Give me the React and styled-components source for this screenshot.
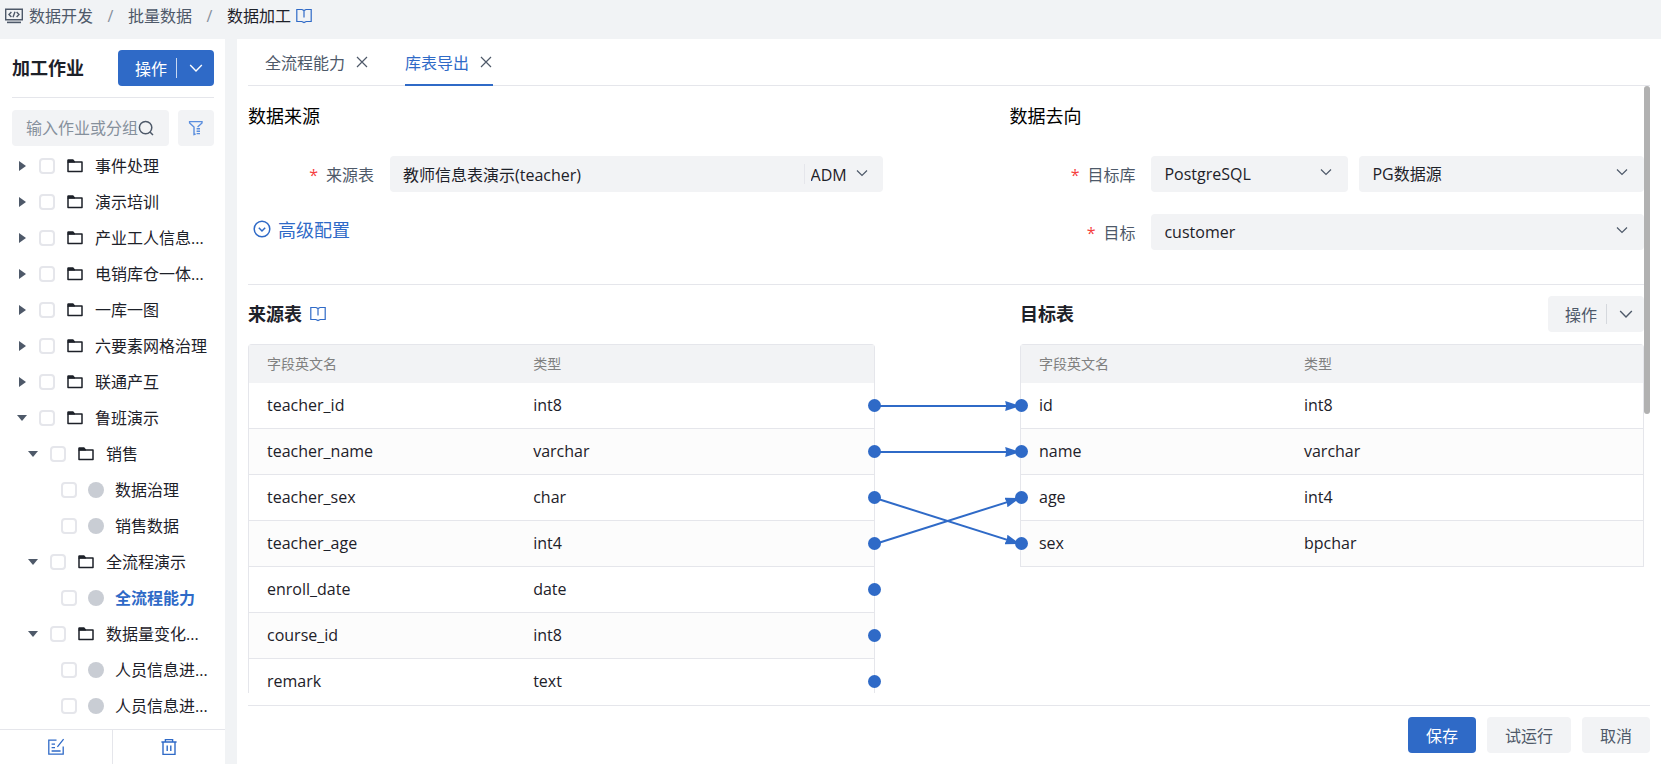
import React from "react";
import styled, { createGlobalStyle, css } from "styled-components";

const c = {
  primary: "#2f6ac7",
  text: "#1d2129",
  sub: "#4e5969",
  muted: "#86909c",
  line: "#e5e6eb",
  fill: "#f2f3f5",
  page: "#f1f3f5",
};

const GlobalStyle = createGlobalStyle`
  * { box-sizing: border-box; }
  body { margin: 0; background: ${c.page}; }
  body, button, input, select {
    font-family: "Open Sans", "Noto Sans CJK SC", sans-serif;
    font-size: 16px;
    color: ${c.text};
  }
  button, input, select { border: 0; background: none; padding: 0; margin: 0; outline: none; }
  button { cursor: pointer; }
  svg { display: block; flex: none; }
`;

/* ---------- icons ---------- */

const Chevron = ({ size = 12 }) => (
  <svg width={size} height={size} viewBox="0 0 12 12" fill="none" stroke="currentColor" strokeWidth="1.2">
    <path d="M1 3.5 6 8.5 11 3.5" />
  </svg>
);

const Close = () => (
  <svg width="14" height="14" viewBox="0 0 14 14" fill="none" stroke="currentColor" strokeWidth="1.2">
    <path d="M2 2 12 12M12 2 2 12" />
  </svg>
);

const Book = () => (
  <svg width="16" height="16" viewBox="0 0 16 16" fill="none" stroke={c.primary} strokeWidth="1.2">
    <path d="M.8 1.5H6L8 2.5 10 1.5H15.2V13.5H10.2L8 14.6 5.8 13.5H.8ZM8 2.5V9.5" />
  </svg>
);

const CodeScreen = () => (
  <svg width="18" height="16" viewBox="0 0 18 16" fill="none" stroke={c.sub} strokeWidth="1.4">
    <path d="M.7 1.2H17.3V11.8H.7Z" />
    <path d="M6.4 4 4 6.5 6.4 9M11.6 4 14 6.5 11.6 9M10 3.8 8 9.2" />
    <path d="M2 14.4H16" strokeWidth="1.6" />
  </svg>
);

const Search = () => (
  <svg width="16" height="16" viewBox="0 0 16 16" fill="none" stroke={c.sub} strokeWidth="1.5">
    <circle cx="7.6" cy="7.6" r="6.2" />
    <path d="M12 12 15 15" />
  </svg>
);

const Filter = () => (
  <svg width="16" height="16" viewBox="0 0 16 16" fill="none" stroke="#5b8ede" strokeWidth="1.4">
    <path d="M9.6 7 14 3V1.6H1.6V3L6 7V14.6L7.6 14" />
    <path d="M8.6 8.8H12M8.6 11.2H12M8.6 13.6H12" />
  </svg>
);

const Folder = () => (
  <svg width="16" height="14" viewBox="0 0 16 14">
    <path d="M1 3H15V12.6H1Z" fill="none" stroke={c.text} strokeWidth="1.5" strokeLinejoin="round" />
    <path d="M.3 3.4V1.2Q.3.3 1.2.3H6.2L8 2.4V3.4Z" fill={c.text} />
  </svg>
);

const Caret = ({ open }) =>
  open ? (
    <svg width="10" height="10" viewBox="0 0 10 10"><path d="M0 2H10L5 8Z" fill={c.sub} /></svg>
  ) : (
    <svg width="10" height="10" viewBox="0 0 10 10"><path d="M2 0V10L9 5Z" fill={c.sub} /></svg>
  );

const Edit = () => (
  <svg width="18" height="18" viewBox="0 0 18 18" fill="none" stroke={c.primary} strokeWidth="1.3">
    <path d="M9.5 2.2H1.8V16.2H16.2V8.5" />
    <path d="M16.6 1.2 10.4 8.8M4.6 6.2H8M4.6 9.6H8M4.6 13H13.6" />
  </svg>
);

const Trash = () => (
  <svg width="18" height="18" viewBox="0 0 18 18" fill="none" stroke={c.primary} strokeWidth="1.4">
    <path d="M1.4 4H16.6M5.4 4V1.6H12.6V4M3 4V16.4H15V4M7.2 7.4V13M10.8 7.4V13" />
  </svg>
);

const CircleDown = () => (
  <svg width="18" height="18" viewBox="0 0 18 18" fill="none" stroke="currentColor" strokeWidth="1.5">
    <circle cx="9" cy="9" r="7.8" />
    <path d="M5.8 7.8 9 11 12.2 7.8" />
  </svg>
);

/* ---------- page frame ---------- */

const Page = styled.div`
  display: flex;
  flex-direction: column;
  height: 100vh;
`;

const Breadcrumb = styled.nav`
  display: flex;
  align-items: center;
  height: 39px;
  padding: 0 5px 8px;
  flex: none;
  line-height: 30px;
`;

const Crumb = styled.a`
  color: ${(p) => (p.$current ? c.text : c.sub)};
  text-decoration: none;
  white-space: nowrap;
  margin-left: ${(p) => (p.$first ? "6px" : 0)};
  margin-right: ${(p) => (p.$current ? "5px" : 0)};
`;

const Slash = styled.span`
  width: 35px;
  text-align: center;
  color: ${c.muted};
`;

const Body = styled.div`
  display: flex;
  gap: 12px;
  flex: 1;
  min-height: 0;
`;

/* ---------- sidebar ---------- */

const Sidebar = styled.aside`
  display: flex;
  flex-direction: column;
  flex: 0 0 225px;
  min-width: 0;
  background: #fff;
`;

const SideHead = styled.div`
  display: flex;
  align-items: center;
  justify-content: space-between;
  margin: 0 11px 12px 12px;
  padding: 11px 0;
  border-bottom: 1px solid ${c.line};
`;

const Heading = styled.h2`
  margin: 0;
  display: flex;
  align-items: center;
  gap: 8px;
  font-size: 18px;
  line-height: 28px;
  font-weight: ${(p) => (p.$plain ? 400 : 700)};
  color: ${(p) => (p.$plain ? "#000" : c.text)};
`;

const SplitButton = styled.div`
  display: flex;
  align-items: center;
  width: 96px;
  height: 36px;
  border-radius: 4px;
  background: ${(p) => (p.$primary ? c.primary : c.fill)};
  button {
    color: ${(p) => (p.$primary ? "#fff" : c.sub)};
    height: 36px;
    display: flex;
    align-items: center;
  }
  button:first-child { padding: 0 9px 0 17px; white-space: nowrap; }
  button:last-child { flex: 1; justify-content: center; }
`;

const SplitLine = styled.span`
  width: 1px;
  height: 20px;
  background: ${(p) => (p.$primary ? "#c8d8f2" : "#d5d8dd")};
`;

const SearchRow = styled.div`
  display: flex;
  gap: 9px;
  margin: 0 11px 2px 12px;
`;

const SearchBox = styled.label`
  display: flex;
  align-items: center;
  flex: 1;
  min-width: 0;
  height: 36px;
  padding: 0 15px 0 14px;
  border-radius: 4px;
  background: ${c.fill};
  input { flex: 1; min-width: 0; }
  input::placeholder { color: ${c.muted}; }
`;

const IconButton = styled.button`
  display: flex;
  align-items: center;
  justify-content: center;
  width: 36px;
  height: 36px;
  border-radius: 4px;
  background: ${c.fill};
`;

const Tree = styled.ul`
  list-style: none;
  margin: 0;
  padding: 0;
  flex: 1;
  min-height: 0;
  overflow: hidden;
`;

const TreeRow = styled.li`
  display: flex;
  align-items: center;
  height: 36px;
  padding-left: ${(p) => 17 + p.$level * 11}px;
`;

const CaretSlot = styled.span`
  width: 22px;
`;

const Check = styled.input`
  appearance: none;
  flex: none;
  width: 16px;
  height: 16px;
  border: 2px solid ${c.line};
  border-radius: 4px;
  background: #fff;
`;

const NodeLabel = styled.label`
  display: flex;
  align-items: center;
  gap: 12px;
  margin-left: 12px;
  white-space: nowrap;
  line-height: 24px;
  ${(p) => p.$leaf && css`gap: 11px; margin-left: 11px;`}
  ${(p) => p.$active && css`color: ${c.primary}; font-weight: 700;`}
`;

const StatusDot = styled.span`
  width: 16px;
  height: 16px;
  border-radius: 50%;
  background: #c9cdd4;
`;

const SideFoot = styled.div`
  display: flex;
  height: 35px;
  flex: none;
  border-top: 1px solid ${c.line};
  button {
    flex: 1;
    display: flex;
    align-items: center;
    justify-content: center;
  }
  button + button { border-left: 1px solid ${c.line}; }
`;

/* ---------- main panel ---------- */

const Main = styled.main`
  display: flex;
  flex-direction: column;
  flex: 1;
  min-width: 0;
  padding: 0 11px;
  background: #fff;
`;

const Tabs = styled.div`
  display: flex;
  gap: 36px;
  height: 47px;
  flex: none;
  padding-left: 17px;
  border-bottom: 1px solid ${c.line};
`;

const Tab = styled.div`
  display: flex;
  align-items: center;
  gap: 10px;
  height: 47px;
  border-bottom: 2px solid ${(p) => (p.$active ? c.primary : "transparent")};
  button { display: flex; color: ${c.sub}; white-space: nowrap; }
  button:first-child { color: ${(p) => (p.$active ? c.primary : c.sub)}; }
`;

const ScrollFrame = styled.div`
  display: flex;
  flex: 1;
  min-height: 0;
  margin-bottom: 12px;
`;

const ScrollArea = styled.div`
  flex: 1;
  min-width: 0;
  overflow-y: auto;
  scrollbar-width: none;
`;

const ScrollTrack = styled.div`
  flex: 0 0 6px;
`;

const ScrollThumb = styled.div`
  height: 54%;
  border-radius: 3px;
  background: #b1b1b1;
`;

const Config = styled.section`
  display: grid;
  grid-template-columns: 5fr 1fr 5fr;
  padding: 16px 0 34px;
  border-bottom: 1px solid ${c.line};
`;

const Side = styled.div`
  display: flex;
  flex-direction: column;
  gap: 22px;
  grid-column: ${(p) => p.$col};
  ${Heading} { margin-bottom: 4px; }
`;

const Field = styled.div`
  display: flex;
  align-items: center;
`;

const FieldLabel = styled.label`
  flex: 0 0 142px;
  padding-right: 16px;
  text-align: right;
  color: ${c.sub};
  &::before { content: "*"; color: #f53f3f; margin-right: 8px; }
`;

const Controls = styled.div`
  display: flex;
  gap: 11px;
  flex: 1;
  min-width: 0;
`;

const SelectBox = styled.div`
  display: grid;
  align-items: center;
  flex: ${(p) => (p.$narrow ? "0 0 40%" : "1")};
  min-width: 0;
  height: 36px;
  border-radius: 4px;
  background: ${c.fill};
  color: ${c.sub};
  select, svg { grid-area: 1 / 1; }
  select { appearance: none; width: 100%; height: 36px; padding: 0 36px 0 13px; }
  svg { justify-self: end; margin: 0 16px 4px 0; pointer-events: none; }
`;

const Combo = styled.div`
  display: flex;
  align-items: center;
  flex: 1;
  min-width: 0;
  height: 36px;
  border-radius: 4px;
  background: ${c.fill};
  input { flex: 1; min-width: 0; height: 36px; padding-left: 13px; }
`;

const Suffix = styled.div`
  display: grid;
  align-items: center;
  width: 79px;
  height: 20px;
  border-left: 1px solid ${c.line};
  color: ${c.sub};
  select, svg { grid-area: 1 / 1; }
  select { appearance: none; width: 100%; padding-left: 6px; }
  svg { justify-self: end; margin: 0 15px 4px 0; pointer-events: none; }
`;

const MoreButton = styled.button`
  display: flex;
  align-items: center;
  align-self: flex-start;
  gap: 7px;
  height: 30px;
  padding-left: 5px;
  font-size: 18px;
  color: ${c.primary};
`;

const Mapping = styled.section`
  display: grid;
  grid-template-columns: 449fr 104fr 447fr;
  row-gap: 12px;
  align-items: start;
  padding: 11px 0 24px;
`;

const TableHead = styled.div`
  display: flex;
  align-items: center;
  justify-content: space-between;
  height: 36px;
  grid-column: ${(p) => p.$col};
`;

const FieldTable = styled.table`
  grid-column: ${(p) => p.$col};
  width: 100%;
  table-layout: fixed;
  border-collapse: separate;
  border-spacing: 0;
  border: solid ${c.line};
  border-width: 1px 1px 0;
  border-radius: 4px 4px 0 0;
  th {
    height: 38px;
    padding: 0 18px 2px;
    background: ${c.fill};
    font-size: 14px;
    font-weight: 400;
    text-align: left;
    color: #808080;
  }
  th:first-child { width: 42.6%; }
  td {
    position: relative;
    height: 46px;
    padding: 0 18px 2px;
    border-bottom: 1px solid ${c.line};
  }
  tbody tr:nth-child(even) { background: #fcfcfc; }
`;

const Port = styled.span`
  position: absolute;
  z-index: 2;
  top: 16px;
  ${(p) => (p.$side === "right" ? "right: -7px;" : "left: -6px;")}
  width: 13px;
  height: 13px;
  border-radius: 50%;
  background: ${c.primary};
`;

const Links = styled.svg`
  grid-column: 2;
  position: relative;
  z-index: 1;
  width: 100%;
  height: 184px;
  margin-top: 39px;
  overflow: visible;
`;

const Footer = styled.footer`
  display: flex;
  justify-content: flex-end;
  gap: 11px;
  flex: none;
  padding: 11px 0;
  border-top: 1px solid ${c.line};
`;

const Button = styled.button`
  height: 36px;
  padding: 0 18px;
  border-radius: 4px;
  background: ${(p) => (p.$primary ? c.primary : c.fill)};
  color: ${(p) => (p.$primary ? "#fff" : c.sub)};
`;

/* ---------- data ---------- */

const tree = [
  { name: "事件处理", level: 0 },
  { name: "演示培训", level: 0 },
  { name: "产业工人信息...", level: 0 },
  { name: "电销库仓一体...", level: 0 },
  { name: "一库一图", level: 0 },
  { name: "六要素网格治理", level: 0 },
  { name: "联通产互", level: 0 },
  { name: "鲁班演示", level: 0, open: true },
  { name: "销售", level: 1, open: true },
  { name: "数据治理", level: 2, leaf: true },
  { name: "销售数据", level: 2, leaf: true },
  { name: "全流程演示", level: 1, open: true },
  { name: "全流程能力", level: 2, leaf: true, active: true },
  { name: "数据量变化...", level: 1, open: true },
  { name: "人员信息进...", level: 2, leaf: true },
  { name: "人员信息进...", level: 2, leaf: true },
];

const sourceFields = [
  ["teacher_id", "int8"],
  ["teacher_name", "varchar"],
  ["teacher_sex", "char"],
  ["teacher_age", "int4"],
  ["enroll_date", "date"],
  ["course_id", "int8"],
  ["remark", "text"],
];

const targetFields = [
  ["id", "int8"],
  ["name", "varchar"],
  ["age", "int4"],
  ["sex", "bpchar"],
];

const links = [[0, 0], [1, 1], [2, 3], [3, 2]];
const rowCenter = (i) => i * 46 + 23;

/* ---------- parts ---------- */

function Split({ primary, name }) {
  return (
    <SplitButton $primary={primary}>
      <button type="button">操作</button>
      <SplitLine $primary={primary} />
      <button type="button" aria-label={name}><Chevron size={14} /></button>
    </SplitButton>
  );
}

function Select({ id, value, narrow, label }) {
  return (
    <SelectBox $narrow={narrow}>
      <select id={id} aria-label={label} defaultValue={value}>
        <option>{value}</option>
      </select>
      <Chevron />
    </SelectBox>
  );
}

function Fields({ rows, col, side }) {
  return (
    <FieldTable $col={col}>
      <thead>
        <tr><th>字段英文名</th><th>类型</th></tr>
      </thead>
      <tbody>
        {rows.map(([name, type]) => (
          <tr key={name}>
            <td>{side === "left" && <Port $side="left" />}{name}</td>
            <td>{type}{side === "right" && <Port $side="right" />}</td>
          </tr>
        ))}
      </tbody>
    </FieldTable>
  );
}

export default function App() {
  return (
    <Page>
      <GlobalStyle />
      <Breadcrumb>
        <CodeScreen />
        <Crumb href="#" $first>数据开发</Crumb>
        <Slash>/</Slash>
        <Crumb href="#">批量数据</Crumb>
        <Slash>/</Slash>
        <Crumb href="#" $current>数据加工</Crumb>
        <Book />
      </Breadcrumb>

      <Body>
        <Sidebar>
          <SideHead>
            <Heading>加工作业</Heading>
            <Split primary name="更多作业操作" />
          </SideHead>
          <SearchRow>
            <SearchBox>
              <input type="text" placeholder="输入作业或分组" aria-label="搜索" />
              <Search />
            </SearchBox>
            <IconButton type="button" aria-label="筛选"><Filter /></IconButton>
          </SearchRow>
          <Tree>
            {tree.map((n, i) => (
              <TreeRow key={i} $level={n.level}>
                <CaretSlot>{!n.leaf && <Caret open={n.open} />}</CaretSlot>
                <Check type="checkbox" id={`node-${i}`} />
                <NodeLabel htmlFor={`node-${i}`} $leaf={n.leaf} $active={n.active}>
                  {n.leaf ? <StatusDot /> : <Folder />}
                  {n.name}
                </NodeLabel>
              </TreeRow>
            ))}
          </Tree>
          <SideFoot>
            <button type="button" aria-label="编辑"><Edit /></button>
            <button type="button" aria-label="删除"><Trash /></button>
          </SideFoot>
        </Sidebar>

        <Main>
          <Tabs>
            <Tab>
              <button type="button">全流程能力</button>
              <button type="button" aria-label="关闭"><Close /></button>
            </Tab>
            <Tab $active>
              <button type="button">库表导出</button>
              <button type="button" aria-label="关闭"><Close /></button>
            </Tab>
          </Tabs>

          <ScrollFrame>
            <ScrollArea>
              <Config>
                <Side $col={1}>
                  <Heading $plain>数据来源</Heading>
                  <Field>
                    <FieldLabel htmlFor="source">来源表</FieldLabel>
                    <Combo>
                      <input id="source" type="text" defaultValue="教师信息表演示(teacher)" />
                      <Suffix>
                        <select aria-label="数据层" defaultValue="ADM"><option>ADM</option></select>
                        <Chevron />
                      </Suffix>
                    </Combo>
                  </Field>
                  <MoreButton type="button"><CircleDown />高级配置</MoreButton>
                </Side>
                <Side $col={3}>
                  <Heading $plain>数据去向</Heading>
                  <Field>
                    <FieldLabel htmlFor="database">目标库</FieldLabel>
                    <Controls>
                      <Select id="database" value="PostgreSQL" narrow />
                      <Select value="PG数据源" label="数据源" />
                    </Controls>
                  </Field>
                  <Field>
                    <FieldLabel htmlFor="target">目标</FieldLabel>
                    <Controls><Select id="target" value="customer" /></Controls>
                  </Field>
                </Side>
              </Config>

              <Mapping>
                <TableHead $col={1}><Heading>来源表<Book /></Heading></TableHead>
                <TableHead $col={3}>
                  <Heading>目标表</Heading>
                  <Split name="更多映射操作" />
                </TableHead>
                <Fields rows={sourceFields} col={1} side="right" />
                <Links>
                  <defs>
                    <marker id="arrow" markerUnits="userSpaceOnUse" markerWidth="15" markerHeight="10" refX="15" refY="5" orient="auto">
                      <path d="M0 0 15 5 0 10 1 5Z" fill={c.primary} />
                    </marker>
                  </defs>
                  {links.map(([from, to]) => (
                    <line
                      key={from}
                      x1="0"
                      x2="100%"
                      y1={rowCenter(from)}
                      y2={rowCenter(to)}
                      stroke={c.primary}
                      strokeWidth="2"
                      markerEnd="url(#arrow)"
                    />
                  ))}
                </Links>
                <Fields rows={targetFields} col={3} side="left" />
              </Mapping>
            </ScrollArea>
            <ScrollTrack><ScrollThumb /></ScrollTrack>
          </ScrollFrame>

          <Footer>
            <Button type="button" $primary>保存</Button>
            <Button type="button">试运行</Button>
            <Button type="button">取消</Button>
          </Footer>
        </Main>
      </Body>
    </Page>
  );
}
